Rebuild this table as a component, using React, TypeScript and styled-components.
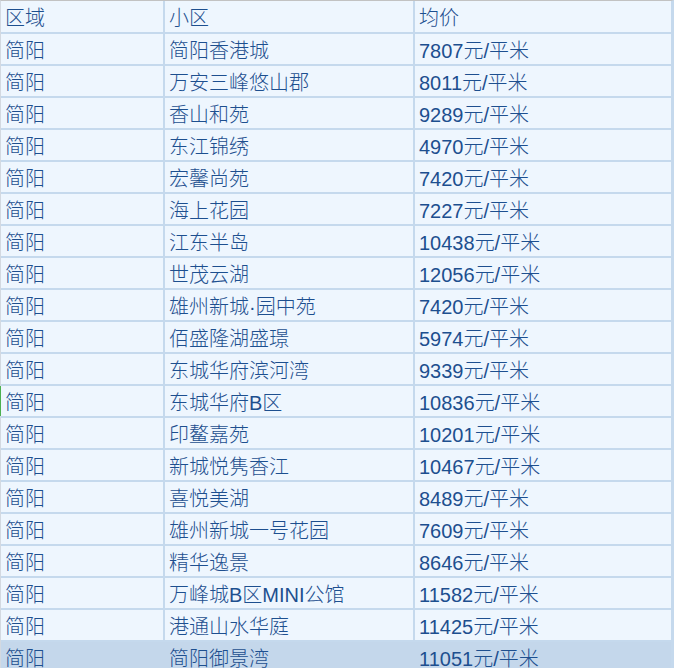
import React from "react";
import styled, { createGlobalStyle } from "styled-components";

const Global = createGlobalStyle`
  html, body {
    margin: 0;
    padding: 0;
    background: #ffffff;
    overflow: hidden;
  }
`;

const Table = styled.div`
  width: 674px;
  box-sizing: border-box;
  display: grid;
  row-gap: 2px;
  background: #c5d9ed;
  border-top: 1px solid #c2c2c2;
  border-left: 1px solid #d3d9e1;
  border-right: 3px solid #c5d9ed;
  font-family: "Liberation Sans", "Noto Sans CJK SC", sans-serif;
  font-size: 20px;
  font-weight: 300;
  color: #1d4f8f;
`;

const Row = styled.div<{ $height: number; $active?: boolean }>`
  display: grid;
  grid-template-columns: 162px 248px 256px;
  column-gap: 2px;
  height: ${(p) => p.$height}px;
  background: ${(p) => (p.$active ? "#c4d7eb" : "#c5d9ed")};
`;

const Cell = styled.div<{ $active?: boolean; $flag?: boolean }>`
  display: flex;
  align-items: center;
  padding-left: 4px;
  white-space: nowrap;
  overflow: hidden;
  background: ${(p) => (p.$active ? "#c4d7eb" : "#eef6fe")};
  box-shadow: ${(p) => (p.$flag ? "-1px 0 0 #4cb050" : "none")};
`;

const data: [string, string][] = [
  ["简阳香港城", "7807"],
  ["万安三峰悠山郡", "8011"],
  ["香山和苑", "9289"],
  ["东江锦绣", "4970"],
  ["宏馨尚苑", "7420"],
  ["海上花园", "7227"],
  ["江东半岛", "10438"],
  ["世茂云湖", "12056"],
  ["雄州新城·园中苑", "7420"],
  ["佰盛隆湖盛璟", "5974"],
  ["东城华府滨河湾", "9339"],
  ["东城华府B区", "10836"],
  ["印鳌嘉苑", "10201"],
  ["新城悦隽香江", "10467"],
  ["喜悦美湖", "8489"],
  ["雄州新城一号花园", "7609"],
  ["精华逸景", "8646"],
  ["万峰城B区MINI公馆", "11582"],
  ["港通山水华庭", "11425"],
  ["简阳御景湾", "11051"],
];

export default function App() {
  return (
    <>
      <Global />
      <Table>
        <Row $height={31}>
          <Cell>区域</Cell>
          <Cell>小区</Cell>
          <Cell>均价</Cell>
        </Row>
        {data.map(([name, price], i) => {
          const active = i === data.length - 1;
          return (
            <Row key={name} $height={30} $active={active}>
              <Cell $active={active} $flag={i === 11}>简阳</Cell>
              <Cell $active={active}>{name}</Cell>
              <Cell $active={active}>{price}元/平米</Cell>
            </Row>
          );
        })}
      </Table>
    </>
  );
}
